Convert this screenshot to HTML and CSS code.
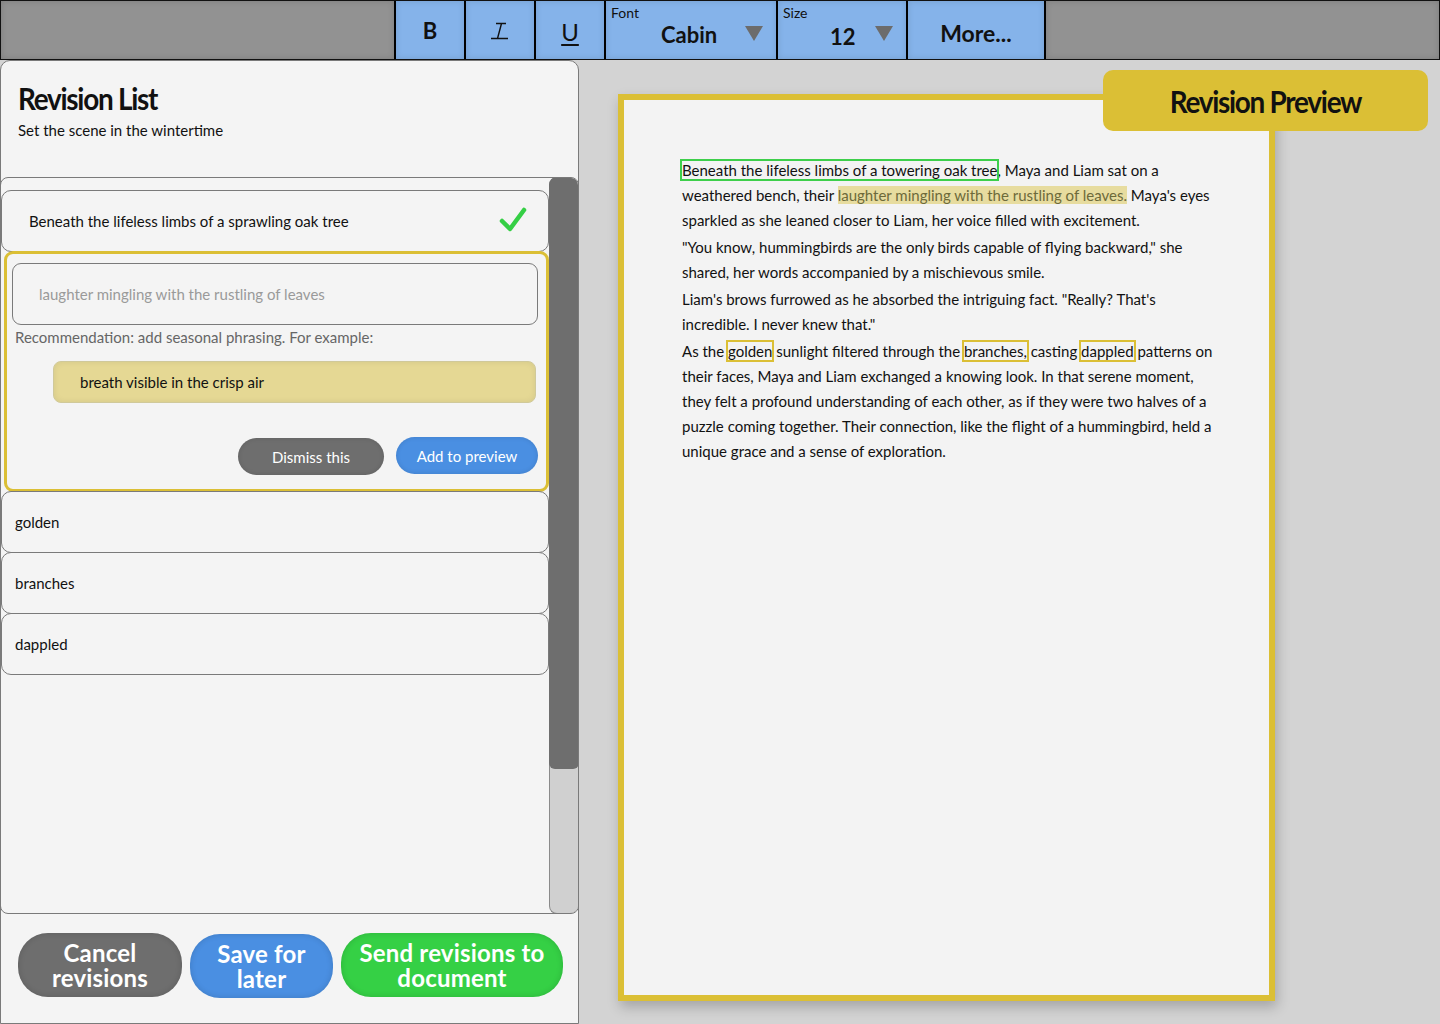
FILE: index.html
```html
<!DOCTYPE html>
<html lang="en">
<head>
<meta charset="utf-8">
<title>Revision List</title>
<link rel="stylesheet" href="styles.css">
</head>
<body>
<header class="toolbar">
  <div class="tb-fill tb-left"></div>
  <button class="tb-btn tb-b">B</button>
  <button class="tb-btn tb-i" aria-label="Italic"><svg width="24" height="20" viewBox="0 0 24 20"><path d="M8 2.5 H18 M13.5 2.5 L9.5 17.5 M3 17.5 H20" fill="none" stroke="#111" stroke-width="1.4"/></svg></button>
  <button class="tb-btn tb-u">U</button>
  <div class="tb-select tb-font">
    <span class="tb-label">Font</span>
    <span class="tb-value">Cabin</span>
    <span class="tb-caret"></span>
  </div>
  <div class="tb-select tb-size">
    <span class="tb-label">Size</span>
    <span class="tb-value">12</span>
    <span class="tb-caret"></span>
  </div>
  <button class="tb-btn tb-more">More...</button>
  <div class="tb-fill tb-right"></div>
</header>

<main class="workspace">
  <section class="rev-panel">
    <div class="rev-head">
      <h1 class="rev-title">Revision List</h1>
      <p class="rev-sub">Set the scene in the wintertime</p>
    </div>

    <div class="rev-list">
      <div class="rev-items">
        <div class="rev-item rev-item-done">
          <span>Beneath the lifeless limbs of a sprawling oak tree</span>
          <svg class="check" width="28" height="26" viewBox="0 0 28 26"><path d="M3 14 L11 22 L25 3" fill="none" stroke="#35cf45" stroke-width="4.5" stroke-linecap="round" stroke-linejoin="round"/></svg>
        </div>

        <div class="rev-card">
          <div class="rev-input">laughter mingling with the rustling of leaves</div>
          <p class="rev-reco">Recommendation: add seasonal phrasing. For example:</p>
          <div class="rev-chip">breath visible in the crisp air</div>
          <div class="rev-actions">
            <button class="pill pill-gray">Dismiss this</button>
            <button class="pill pill-blue">Add to preview</button>
          </div>
        </div>

        <div class="rev-item">golden</div>
        <div class="rev-item">branches</div>
        <div class="rev-item">dappled</div>
      </div>
      <div class="scrollbar"><div class="scroll-thumb"></div></div>
    </div>

    <div class="rev-footer">
      <button class="big big-gray">Cancel<br>revisions</button>
      <button class="big big-blue">Save for<br>later</button>
      <button class="big big-green">Send revisions to<br>document</button>
    </div>
  </section>

  <section class="preview">
    <div class="page">
      <div class="badge"><span class="badge-text">Revision Preview</span></div>
      <div class="page-text">
        <p><span class="mark-green">Beneath the lifeless limbs of a towering oak tree</span>, Maya and Liam sat on a weathered bench, their <span class="mark-hl">laughter mingling with the rustling of leaves.</span> Maya's eyes sparkled as she leaned closer to Liam, her voice filled with excitement.</p>
        <p>"You know, hummingbirds are the only birds capable of flying backward," she shared, her words accompanied by a mischievous smile.</p>
        <p>Liam's brows furrowed as he absorbed the intriguing fact. "Really? That's incredible. I never knew that."</p>
        <p>As the <span class="mark-box">golden</span> sunlight filtered through the <span class="mark-box">branches,</span> casting <span class="mark-box">dappled</span> patterns on their faces, Maya and Liam exchanged a knowing look. In that serene moment, they felt a profound understanding of each other, as if they were two halves of a puzzle coming together. Their connection, like the flight of a hummingbird, held a unique grace and a sense of exploration.</p>
      </div>
    </div>
  </section>
</main>
</body>
</html>
```

FILE: styles.css
```css
* { box-sizing: border-box; }
html, body { margin: 0; padding: 0; }
body {
  width: 1440px;
  height: 1024px;
  overflow: hidden;
  background: #d3d3d3;
  font-family: Lato, "Open Sans", sans-serif;
  color: #111;
}
button { font-family: inherit; cursor: pointer; }

/* Toolbar */
.toolbar {
  display: flex;
  height: 60px;
  background: #000;
  border: 1px solid #111;
  gap: 2px;
}
.tb-fill {
  background: #929292;
  box-shadow: inset 0 0 6px rgba(0,0,0,0.15);
}
.tb-left { width: 393px; }
.tb-right { flex: 1; }
.tb-btn, .tb-select {
  background: #85b3ea;
  border: none;
  box-shadow: inset 0 0 6px rgba(0,0,0,0.12);
  color: #111;
  padding: 0;
}
.tb-btn {
  width: 68px;
  font-size: 22px;
  font-weight: 700;
  display: flex;
  align-items: center;
  justify-content: center;
}
.tb-i svg { margin-top: 2px; }
.tb-u {
  font-weight: 400;
  text-decoration: underline;
  text-decoration-thickness: 2px;
  text-underline-offset: 3px;
  font-size: 24px;
  padding-top: 2px;
}
.tb-more { width: 136px; font-size: 23px; font-weight: 700; padding-top: 6px; }
.tb-select {
  position: relative;
  display: flex;
  align-items: center;
}
.tb-font { width: 170px; }
.tb-size { width: 128px; }
.tb-label {
  position: absolute;
  left: 5px;
  top: 3px;
  font-size: 14px;
  color: #111;
}
.tb-value {
  font-size: 22px;
  font-weight: 700;
  margin-top: 8px;
}
.tb-font .tb-value { margin-left: 55px; }
.tb-size .tb-value { margin-left: 52px; margin-top: 12px; }
.tb-caret {
  width: 0; height: 0;
  border-left: 9px solid transparent;
  border-right: 9px solid transparent;
  border-top: 15px solid #6c6c6c;
  margin-left: auto;
  margin-right: 13px;
  margin-top: 6px;
}

/* Workspace */
.workspace {
  display: flex;
  height: 964px;
}

/* Left panel */
.rev-panel {
  width: 579px;
  height: 964px;
  background: #f4f4f4;
  border: 1px solid #7a7a7a;
  border-radius: 10px 10px 0 0;
  display: flex;
  flex-direction: column;
}
.rev-head {
  padding: 18px 17px 0;
  height: 116px;
}
.rev-title {
  margin: 0;
  font-size: 31px;
  font-weight: 700;
  letter-spacing: -1.4px;
  line-height: 38px;
  transform: scaleX(0.9);
  transform-origin: left center;
}
.rev-sub {
  margin: 4px 0 0;
  font-size: 15px;
}
.rev-list {
  height: 737px;
  margin-left: -1px;
  margin-right: -1px;
  border: 1px solid #7a7a7a;
  border-radius: 8px;
  display: flex;
  overflow: hidden;
}
.rev-items {
  flex: 1;
  padding-top: 12px;
  display: flex;
  flex-direction: column;
}
.rev-item {
  height: 62px;
  flex: none;
  border: 1px solid #7a7a7a;
  border-radius: 10px;
  display: flex;
  align-items: center;
  padding: 0 13px;
  font-size: 15px;
  background: #f4f4f4;
}
.rev-item + .rev-item { margin-top: -1px; }
.rev-item-done {
  padding: 0 21px 0 27px;
  justify-content: space-between;
}
.check { margin-top: -3px; }

.rev-card {
  height: 241px;
  flex: none;
  margin: -1px 0 0 3px;
  border: 3px solid #dbbf35;
  border-radius: 9px;
  padding: 9px 8px 0 2px;
  display: flex;
  flex-direction: column;
}
.rev-input {
  height: 62px;
  border: 1px solid #7a7a7a;
  border-radius: 9px;
  display: flex;
  align-items: center;
  padding-left: 26px;
  color: #9a9a9a;
  font-size: 15px;
  margin-left: 3px;
}
.rev-reco {
  margin: 2px 0 0 6px;
  font-size: 15px;
  color: #666;
  line-height: 20px;
}
.rev-chip {
  margin: 14px 2px 0 44px;
  height: 42px;
  background: #e5d894;
  border: 1px solid #d0c99a;
  border-radius: 8px;
  box-shadow: inset 0 0 6px rgba(0,0,0,0.08);
  display: flex;
  align-items: center;
  padding-left: 26px;
  font-size: 15px;
}
.rev-actions {
  display: flex;
  justify-content: flex-end;
  gap: 12px;
  margin-top: 34px;
}
.pill {
  height: 37px;
  border: none;
  border-radius: 19px;
  color: #fff;
  font-size: 15px;
  box-shadow: inset 0 0 5px rgba(0,0,0,0.12);
}
.pill-gray { width: 146px; background: #6e6e6e; margin-top: 1px; }
.pill-blue { width: 142px; background: #4a8fe2; }
.rev-card + .rev-item { margin-top: -1px; }

.scrollbar {
  width: 29px;
  background: #d0d0d0;
  border: 1px solid #8a8a8a;
  border-right: none;
  border-radius: 8px 0 8px 8px;
  margin: -1px 0 -1px 0;
}
.scroll-thumb {
  height: 592px;
  background: #6e6e6e;
  border-radius: 8px 8px 6px 6px;
  margin: -1px -1px 0 -1px;
}

.rev-footer {
  display: flex;
  gap: 8px;
  padding: 19px 0 0 17px;
}
.big {
  height: 64px;
  border: none;
  border-radius: 30px;
  color: #fff;
  font-size: 24px;
  font-weight: 700;
  line-height: 25px;
  letter-spacing: 0.2px;
  box-shadow: inset 0 0 6px rgba(0,0,0,0.15);
}
.big-gray { width: 164px; background: #6e6e6e; }
.big-blue { width: 143px; background: #4a8fe2; margin-top: 1px; }
.big-green { width: 222px; background: #35d045; }

/* Preview */
.preview {
  flex: 1;
  padding: 34px 0 0 39px;
}
.page {
  position: relative;
  width: 657px;
  height: 907px;
  background: #f3f3f3;
  border: 6px solid #dbbf35;
  box-shadow: 2px 6px 12px rgba(0,0,0,0.22);
  padding: 58px 40px 0 58px;
}
.badge {
  position: absolute;
  left: 479px;
  top: -30px;
  width: 325px;
  height: 61px;
  background: #dbbf35;
  border-radius: 10px;
  display: flex;
  align-items: center;
  justify-content: center;
  color: #111;
}
.badge-text {
  display: inline-block;
  font-size: 31px;
  font-weight: 700;
  letter-spacing: -1.4px;
  transform: scaleX(0.9);
}
.page-text {
  width: 537px;
  font-size: 15px;
  line-height: 25px;
}
.page-text p { margin: 0 0 2px; }
.mark-green {
  outline: 2px solid #3dcf4b;
  outline-offset: 0;
}
.mark-hl {
  background: #e7dc9f;
  color: #6d6a3a;
}
.mark-box {
  outline: 2px solid #dbbf35;
}
```
